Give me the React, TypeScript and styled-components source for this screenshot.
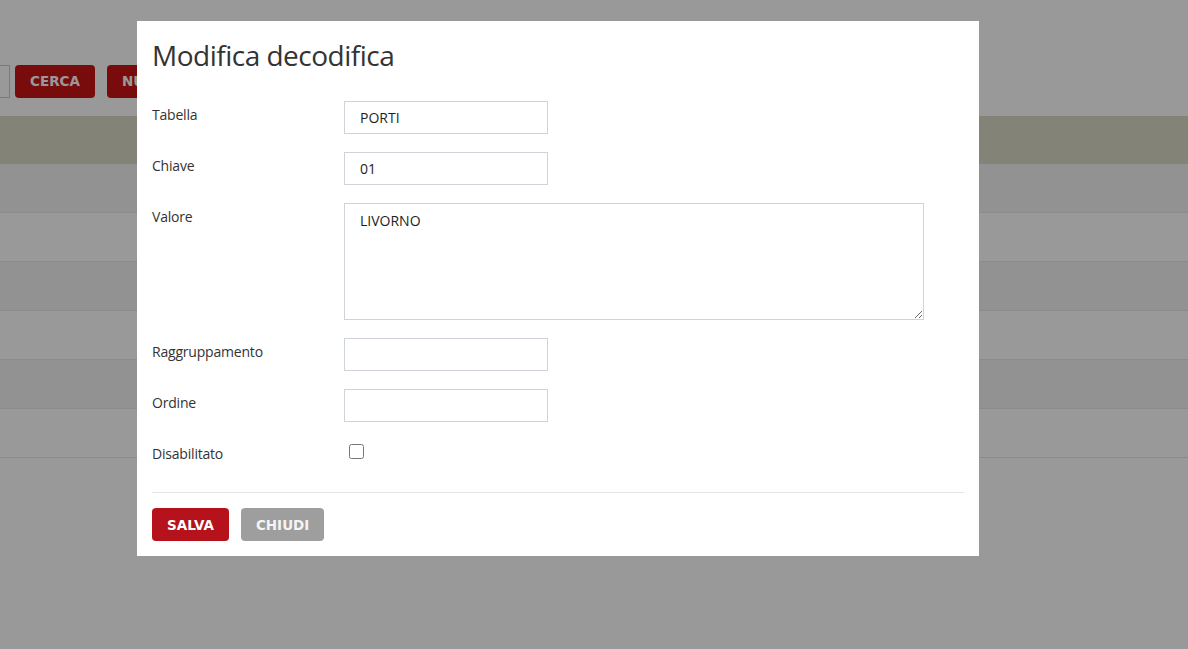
import React from "react";
import styled, { createGlobalStyle } from "styled-components";

const GlobalStyle = createGlobalStyle`
  html, body {
    margin: 0;
    padding: 0;
    background: #ffffff;
    overflow: hidden;
  }
  body {
    font-family: "Open Sans", "Noto Sans", sans-serif;
    color: #333333;
  }
  * { box-sizing: border-box; }
`;

/* ---------- background page ---------- */

const Page = styled.div`
  width: 1188px;
  height: 649px;
  display: flex;
  flex-direction: column;
`;

const Toolbar = styled.div`
  display: flex;
  align-items: center;
  gap: 5px;
  margin-top: 64px;
  height: 34px;
`;

const SearchInput = styled.div`
  width: 10px;
  height: 33px;
  border: 1px solid #cccccc;
  border-left: none;
  background: #ffffff;
`;

const PageButton = styled.button<{ $gap?: number }>`
  height: 33px;
  padding: 0 15px;
  margin-left: ${(p) => p.$gap ?? 0}px;
  border: none;
  border-radius: 4px;
  background: #c81417;
  color: #ffffff;
  font-family: "DejaVu Sans", Verdana, sans-serif;
  font-weight: bold;
  font-size: 13.5px;
`;

const Table = styled.div`
  margin-top: 18px;
  display: flex;
  flex-direction: column;
`;

const TableHead = styled.div`
  height: 48px;
  background: #dadac8;
`;

const TableRow = styled.div<{ $odd: boolean }>`
  height: 49px;
  background: ${(p) => (p.$odd ? "#f4f4f4" : "#ffffff")};
  border-bottom: 1px solid #e8e8e8;
`;

/* ---------- modal ---------- */

const Overlay = styled.div`
  position: fixed;
  inset: 0;
  background: rgba(0, 0, 0, 0.4);
  display: flex;
  align-items: flex-start;
  padding: 21px 0 0 137px;
`;

const Modal = styled.div`
  width: 842px;
  height: 535px;
  background: #ffffff;
  padding: 0 15px 15px;
  display: flex;
  flex-direction: column;
`;

const Title = styled.h2`
  margin: 0;
  padding-top: 16px;
  height: 80px;
  font-size: 28px;
  line-height: 36px;
  font-weight: 400;
  color: #333333;
  letter-spacing: -0.5px;
`;

const Form = styled.div`
  display: flex;
  flex-direction: column;
  gap: 18px;
`;

const Row = styled.div`
  display: grid;
  grid-template-columns: 192px 1fr;
  align-items: start;
`;

const Label = styled.label`
  font-size: 14px;
  line-height: 20px;
  padding-top: 4px;
  color: #333333;
  letter-spacing: -0.2px;
`;

const TextInput = styled.input`
  width: 204px;
  height: 33px;
  border: 1px solid #cfd4da;
  padding: 0 15px;
  font-family: "Open Sans", "Noto Sans", sans-serif;
  font-size: 14px;
  color: #1e1e1e;
  background: #ffffff;
  outline: none;
`;

const TextArea = styled.textarea`
  width: 580px;
  height: 117px;
  border: 1px solid #cfd4da;
  padding: 7px 15px;
  font-family: "Open Sans", "Noto Sans", sans-serif;
  font-size: 14px;
  line-height: 20px;
  color: #1e1e1e;
  resize: both;
  outline: none;
  display: block;
`;

const Check = styled.input`
  width: 15px;
  height: 15px;
  margin: 4px 0 0 5px;
  display: block;
`;

const Divider = styled.hr`
  border: none;
  border-top: 1px solid #e5e5e5;
  margin: 28px 0 15px;
  height: 0;
`;

const Actions = styled.div`
  display: flex;
  gap: 12px;
`;

const ActionButton = styled.button<{ $variant: "primary" | "secondary" }>`
  height: 33px;
  padding: 0 15px;
  border: none;
  border-radius: 4px;
  background: ${(p) => (p.$variant === "primary" ? "#b5121b" : "#9e9e9e")};
  color: ${(p) => (p.$variant === "primary" ? "#ffffff" : "#f4f4f4")};
  font-family: "DejaVu Sans", Verdana, sans-serif;
  font-weight: bold;
  font-size: 13.5px;
  cursor: pointer;
`;

export default function App() {
  const rows = [0, 1, 2, 3, 4, 5];
  return (
    <>
      <GlobalStyle />
      <Page>
        <Toolbar>
          <SearchInput />
          <PageButton>CERCA</PageButton>
          <PageButton $gap={7}>NUOVO</PageButton>
        </Toolbar>
        <Table>
          <TableHead />
          {rows.map((r) => (
            <TableRow key={r} $odd={r % 2 === 0} />
          ))}
        </Table>
      </Page>
      <Overlay>
        <Modal>
          <Title>Modifica decodifica</Title>
          <Form>
            <Row>
              <Label>Tabella</Label>
              <TextInput defaultValue="PORTI" />
            </Row>
            <Row>
              <Label>Chiave</Label>
              <TextInput defaultValue="01" />
            </Row>
            <Row>
              <Label>Valore</Label>
              <TextArea defaultValue="LIVORNO" />
            </Row>
            <Row>
              <Label>Raggruppamento</Label>
              <TextInput defaultValue="" />
            </Row>
            <Row>
              <Label>Ordine</Label>
              <TextInput defaultValue="" />
            </Row>
            <Row>
              <Label>Disabilitato</Label>
              <Check type="checkbox" />
            </Row>
          </Form>
          <Divider />
          <Actions>
            <ActionButton $variant="primary">SALVA</ActionButton>
            <ActionButton $variant="secondary">CHIUDI</ActionButton>
          </Actions>
        </Modal>
      </Overlay>
    </>
  );
}
